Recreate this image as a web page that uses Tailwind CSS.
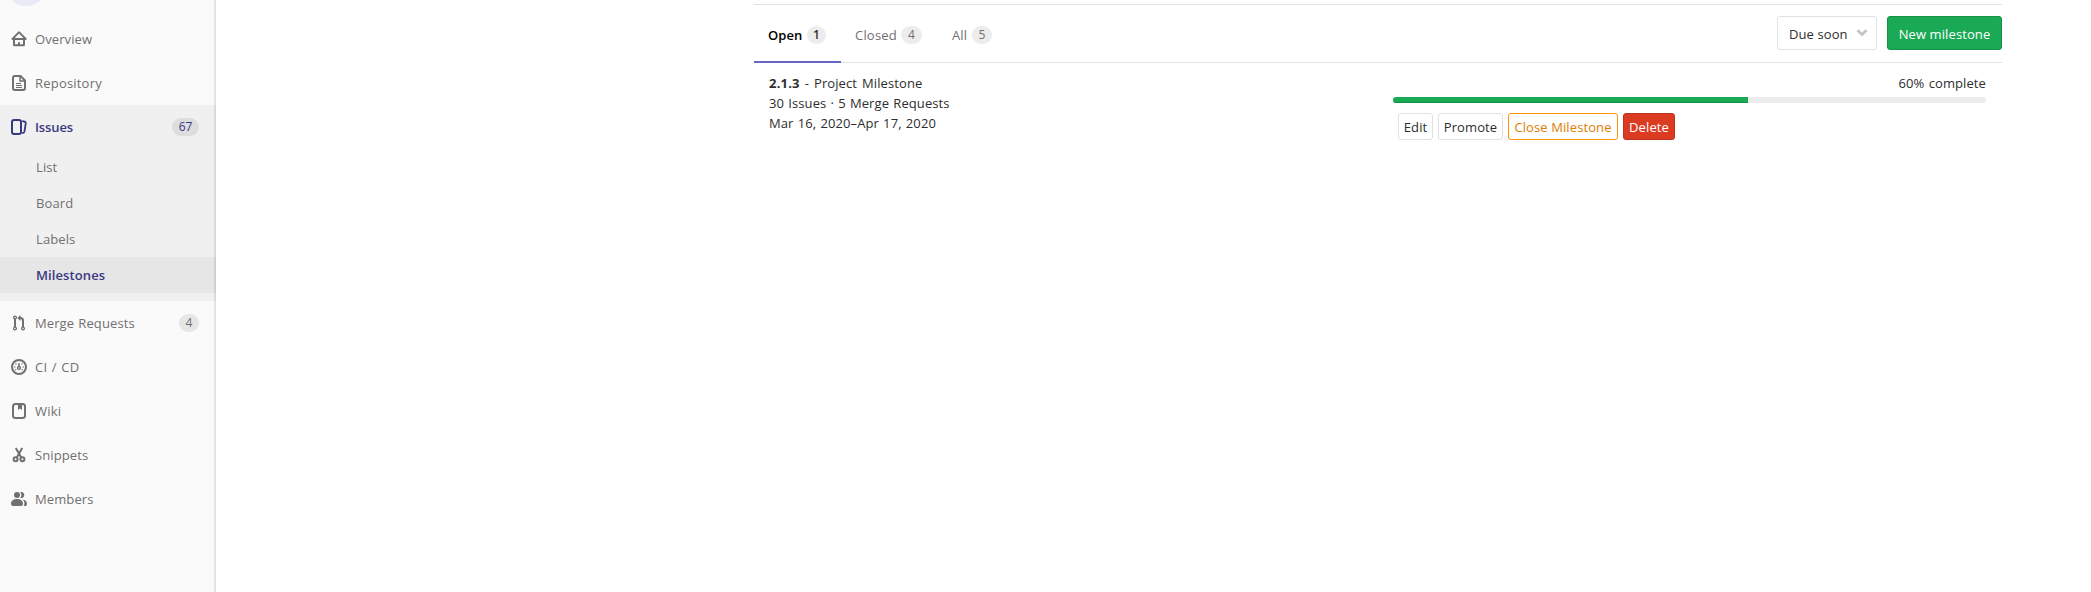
<!DOCTYPE html>
<html lang="en">
<head>
<meta charset="utf-8">
<title>Milestones</title>
<script src="https://cdn.jsdelivr.net/npm/@tailwindcss/browser@4"></script>
</head>
<body class="flex h-[592px] overflow-hidden bg-white font-['Open_Sans',sans-serif] text-[13px] leading-5 tracking-[0.1px] [word-spacing:0.7px] text-[#2e2e2e]">
<aside class="h-[592px] w-[216px] shrink-0 bg-[#fafafa] text-[#707070] shadow-[inset_-2px_0_0_#e3e3e3]">
  <div class="flex h-[17px] items-start overflow-hidden pl-1.5"><div class="-mt-[34px] size-10 shrink-0 rounded-full bg-[#e8eaf6]"></div></div>
  <nav>
    <a class="flex h-11 items-center gap-2 pl-[11px]">
      <svg class="size-4" viewBox="0 0 16 16" fill="currentColor"><path d="M3.706 7h8.725L8.069 2.585 3.706 7zM7 13.369V12a1 1 0 0 1 2 0v1.369h3V9H4v4.369h3zM14 9v4.836c0 .833-.657 1.533-1.5 1.533h-9c-.843 0-1.5-.7-1.5-1.533V9h-.448a1.1 1.1 0 0 1-.783-1.873L6.934.887a1.5 1.5 0 0 1 2.269 0l6.165 6.24A1.1 1.1 0 0 1 14.585 9H14z"/></svg>
      <span>Overview</span>
    </a>
    <a class="flex h-11 items-center gap-2 pl-[11px]">
      <svg class="size-4" viewBox="0 0 16 16" fill="none" stroke="currentColor" stroke-width="2"><path d="M9.500 1H4a2 2 0 0 0-2 2v10a2 2 0 0 0 2 2h8a2 2 0 0 0 2-2V5.500z"/><path d="M9 1v5h5" stroke-width="1.500"/><path d="M5 8.500h5M5 10.500h6M5 12.500h6" stroke-width="1"/></svg>
      <span class="tracking-[0.2px]">Repository</span>
    </a>
    <div class="bg-black/[0.04] pb-2">
      <a class="flex h-11 items-center gap-2 pr-[17px] pl-[11px] font-semibold tracking-[-0.1px] text-[#393982]">
        <svg class="size-4" viewBox="0 0 16 16" fill="none" stroke="currentColor" stroke-width="2"><rect x="1" y="1" width="9" height="14" rx="2"/><path d="M11.200 2.200l2 .3a1.600 1.600 0 0 1 1.500 1.900l-1.200 8a2 2 0 0 1-1.800 1.600h-.5" stroke-width="1.800"/></svg>
        <span>Issues</span>
        <span class="ml-auto flex h-[18px] w-[27px] items-center justify-center rounded-full bg-black/[0.08] text-xs font-normal">67</span>
      </a>
      <a class="flex h-9 items-center pl-9">List</a>
      <a class="flex h-9 items-center pl-9">Board</a>
      <a class="flex h-9 items-center pl-9">Labels</a>
      <a class="flex h-9 items-center bg-black/[0.04] pl-9 font-semibold text-[#393982]">Milestones</a>
    </div>
    <a class="flex h-11 items-center gap-2 pr-[17px] pl-[11px]">
      <svg class="size-4" viewBox="0 0 16 16" fill="none" stroke="currentColor" stroke-width="1.300"><circle cx="4" cy="2.500" r="1.400"/><circle cx="4" cy="13.500" r="1.400"/><circle cx="12" cy="13.500" r="1.400"/><path d="M4 4v8" stroke-width="2"/><path d="M12 12V5.500a2.500 2.500 0 0 0-2.500-2.500H9" stroke-width="2"/><path d="M9.500 0v6L6.300 3z" fill="currentColor" stroke="none"/></svg>
      <span>Merge Requests</span>
      <span class="ml-auto flex h-[18px] w-5 items-center justify-center rounded-full bg-black/[0.08] text-xs">4</span>
    </a>
    <a class="flex h-11 items-center gap-2 pl-[11px]">
      <svg class="size-4" viewBox="0 0 16 16" fill="currentColor"><circle cx="8" cy="8" r="7" fill="none" stroke="currentColor" stroke-width="2"/><path d="M8 4c.5 0 .8.400.8 1v2a2.100 2.100 0 1 1-1.600 0V5c0-.6.300-1 .8-1zM8 8.300a.7.7 0 1 0 0 1.400.7.7 0 0 0 0-1.400z" fill-rule="evenodd"/><circle cx="3.800" cy="8" r=".7"/><circle cx="12.200" cy="8" r=".7"/><circle cx="5" cy="5" r=".7"/><circle cx="11" cy="5" r=".7"/><circle cx="4.800" cy="10.800" r=".7"/><circle cx="11.200" cy="10.800" r=".7"/></svg>
      <span class="tracking-[0.3px]">CI / CD</span>
    </a>
    <a class="flex h-11 items-center gap-2 pl-[11px]">
      <svg class="size-4" viewBox="0 0 16 16" fill="none" stroke="currentColor" stroke-width="2"><rect x="2" y="1" width="12" height="14" rx="2.500"/><path d="M7 1h4v6L9 5.500 7 7z" fill="currentColor" stroke="none"/></svg>
      <span class="tracking-[0.2px]">Wiki</span>
    </a>
    <a class="flex h-11 items-center gap-2 pl-[11px]">
      <svg class="size-4" viewBox="0 0 16 16" fill="none" stroke="currentColor" stroke-width="2"><circle cx="4.600" cy="12.300" r="2"/><circle cx="11.400" cy="12.300" r="2"/><path d="M4.800 1l5.400 9.500M11.200 1L5.800 10.500"/></svg>
      <span>Snippets</span>
    </a>
    <a class="flex h-11 items-center gap-2 pl-[11px]">
      <svg class="size-4" viewBox="0 0 16 16" fill="currentColor"><circle cx="6" cy="4" r="3"/><path d="M6 8c3.500 0 6 1.900 6 4.500 0 1.600-.8 2.500-2 2.500H2c-1.200 0-2-.9-2-2.500C0 9.900 2.500 8 6 8zM9.200 6.800a4.300 4.300 0 0 0 0-5.600A3 3 0 1 1 9.200 6.800zM12.500 15h1.700c1.100 0 1.800-.9 1.800-2.300 0-2.400-1.900-4-4.600-4.200 1.300 1 2 2.400 2 4 0 1-.3 1.900-.9 2.500z"/></svg>
      <span>Members</span>
    </a>
  </nav>
</aside>
<main class="ml-[538px] w-[1248px] pt-1">
  <div class="flex h-[59px] justify-between border-y border-[#e1e1e1]">
    <div class="flex h-[58px] text-[#707070]">
      <a class="flex w-[87px] items-center border-b-2 border-[#6666c4] pt-[3px] pl-[14px] font-semibold text-black"><span class="w-[39px]">Open</span><span class="flex h-[18px] w-[19px] items-center justify-center rounded-full bg-[#ececec] text-xs text-[#2e2e2e]">1</span></a>
      <a class="flex w-[96px] items-center pt-px pl-[14px]"><span class="w-[46px] tracking-[0.2px]">Closed</span><span class="flex h-[18px] w-[21px] items-center justify-center rounded-full bg-[#ececec] text-xs">4</span></a>
      <a class="flex items-center pt-px pl-[15px]"><span class="w-[20px]">All</span><span class="flex h-[18px] w-5 items-center justify-center rounded-full bg-[#ececec] text-xs">5</span></a>
    </div>
    <div class="flex gap-2.5 pt-[11px]">
      <button class="flex h-[34px] w-[100px] items-center justify-between rounded-[3px] border border-[#e1e1e1] pt-px pr-2 pl-[11px]"><span>Due soon</span><svg class="mb-0.5 h-2 w-3" viewBox="0 0 12 8" fill="none" stroke="#c4c4c4" stroke-width="2.800"><path d="M1.500 1.200L6 5.500l4.500-4.300"/></svg></button>
      <button class="flex h-[34px] w-[115px] items-center justify-center rounded-[3px] border border-[#168f48] bg-[#1aaa55] pt-px text-white">New milestone</button>
    </div>
  </div>
  <div class="flex justify-between px-4 pt-2.5">
    <div class="-ml-px">
      <div><strong class="font-bold tracking-[0.2px]">2.1.3</strong><span class="[word-spacing:1.5px]"> - Project Milestone</span></div>
      <div>30 Issues · 5 Merge Requests</div>
      <div>Mar 16, 2020–Apr 17, 2020</div>
    </div>
    <div class="w-[593px]">
      <div class="text-right">60% complete</div>
      <div class="mt-1 h-1.5 overflow-hidden rounded-full bg-[#ececec]"><div class="h-full border-b border-[#168f48] bg-[#1aaa55]" style="width:59.9%"></div></div>
      <div class="mt-2.5 flex gap-[5px] pl-[5px]">
        <button class="h-[27px] w-[35px] rounded-[3px] border border-[#e1e1e1]">Edit</button>
        <button class="h-[27px] w-[65px] rounded-[3px] border border-[#e1e1e1]">Promote</button>
        <button class="h-[27px] w-[110px] rounded-[3px] border border-[#fc9403] whitespace-nowrap text-[#de7e00]">Close Milestone</button>
        <button class="h-[27px] w-[52px] rounded-[3px] border border-[#c0341d] bg-[#db3b21] text-white">Delete</button>
      </div>
    </div>
  </div>
</main>
</body>
</html>
